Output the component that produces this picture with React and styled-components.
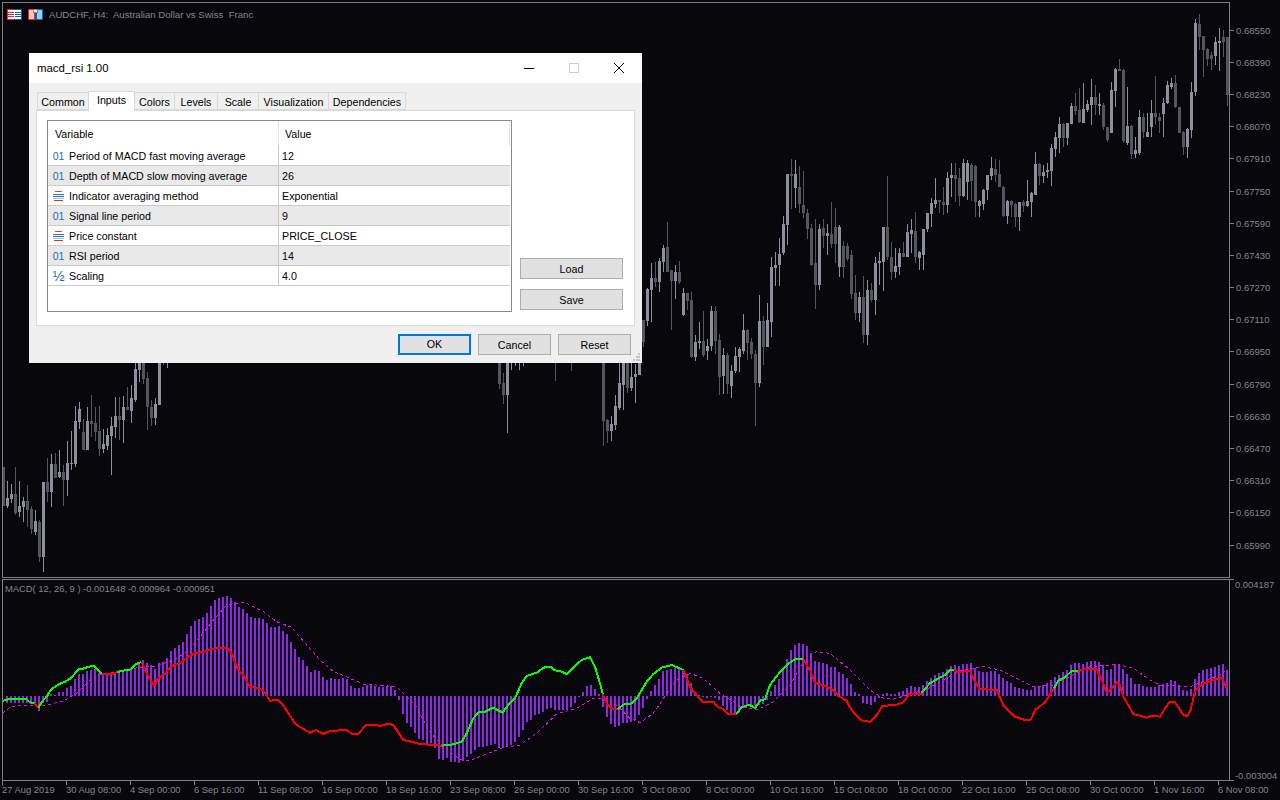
import React from 'react'
import styled, { createGlobalStyle } from 'styled-components'

const GlobalStyle = createGlobalStyle`
  html, body { margin: 0; padding: 0; background: #07070c; }
  * { box-sizing: border-box; }
`

const chartFont = `"Liberation Sans", Arial, sans-serif`
const uiFont = `"Liberation Sans", Arial, sans-serif`
const lineColor = '#7f7f87'
const textColor = '#85858d'

const Page = styled.div`
  width: 1280px;
  height: 800px;
  padding: 2px 0 0 2px;
  overflow: hidden;
  position: relative;
  background: #07070c;
  font-family: ${chartFont};
`
const PaneRow = styled.div`
  display: flex;
  height: ${p => p.$h}px;
  margin-top: ${p => p.$gap || 0}px;
`
const Plot = styled.div`
  position: relative;
  flex: none;
  width: 1228px;
  height: 100%;
  border: 1px solid ${lineColor};
  overflow: hidden;
`
const PlotSvg = styled.svg`
  display: block;
  shape-rendering: crispEdges;
`
const ChartTitle = styled.div`
  position: absolute;
  top: 5px;
  left: 4px;
  display: flex;
  align-items: center;
  gap: 6px;
  color: ${textColor};
  font-size: 9.6px;
  line-height: 13px;
  white-space: pre;
`
const MacdTitle = styled.div`
  position: absolute;
  top: 2px;
  left: 2px;
  color: ${textColor};
  font-size: 9.4px;
  line-height: 13px;
  white-space: pre;
`
const PriceAxis = styled.div`
  padding-top: 12px;
  color: ${textColor};
  font-size: 9.5px;
`
const PriceRow = styled.div`
  display: flex;
  align-items: center;
  gap: 2px;
  height: 32.19px;
  &::before {
    content: '';
    width: 4px;
    height: 1px;
    background: ${lineColor};
  }
`
const SubAxis = styled.div`
  display: flex;
  flex-direction: column;
  justify-content: space-between;
  color: ${textColor};
  font-size: 9.4px;
  line-height: 11px;
`
const SubRow = styled.div`
  display: flex;
  align-items: ${p => p.$edge};
  gap: 1px;
  height: 11px;
  &::before {
    content: '';
    width: 4px;
    height: 1px;
    background: ${lineColor};
  }
`
const TimeAxis = styled.div`
  display: grid;
  grid-template-columns: repeat(20, 64px);
  color: ${textColor};
  font-size: 9.4px;
  line-height: 10px;
  white-space: nowrap;
`
const TimeCell = styled.div`
  &::before {
    content: '';
    display: block;
    width: 1px;
    height: 4px;
    background: ${lineColor};
  }
`

/* dialog */
const Dialog = styled.div`
  position: absolute;
  left: 29px;
  top: 53px;
  width: 613px;
  height: 310px;
  background: #f0f0f0;
  color: #000;
  font-family: ${uiFont};
  font-size: 10.7px;
`
const TitleBar = styled.div`
  display: flex;
  align-items: center;
  height: 30px;
  padding-left: 8px;
  background: #fff;
  font-size: 11.4px;
`
const WindowTitle = styled.div`
  flex: 1;
`
const WinButton = styled.div`
  display: flex;
  align-items: center;
  justify-content: center;
  width: ${p => p.$w}px;
  height: 30px;
`
const TabStrip = styled.div`
  display: flex;
  align-items: flex-end;
  height: 27px;
  padding-left: 9px;
`
const Tab = styled.div`
  position: relative;
  top: ${p => (p.$active ? 1 : 0)}px;
  width: ${p => p.$w}px;
  height: ${p => (p.$active ? 20 : 18)}px;
  margin-left: -1px;
  padding-top: ${p => (p.$active ? 0 : 1)}px;
  text-align: center;
  line-height: 16px;
  background: ${p => (p.$active ? '#fff' : '#f0f0f0')};
  border: 1px solid #d9d9d9;
  border-bottom: ${p => (p.$active ? 'none' : '1px solid #d9d9d9')};
  z-index: ${p => (p.$active ? 1 : 0)};
`
const Panel = styled.div`
  display: flex;
  height: 216px;
  margin: 0 7px;
  padding: 9px 10px 15px;
  background: #fff;
  border: 1px solid #d9d9d9;
`
const Grid = styled.div`
  flex: none;
  width: 465px;
  height: 192px;
  border: 1px solid #87898b;
  background: #fff;
`
const HeadRow = styled.div`
  display: grid;
  grid-template-columns: 231px 1fr;
  height: 25px;
  margin-right: 1px;
  border-right: 1px solid #e3e3e3;
`
const HeadCell = styled.div`
  padding-left: ${p => p.$pad}px;
  line-height: 27px;
  border-right: ${p => (p.$line ? '1px solid #e3e3e3' : 'none')};
`
const Row = styled.div`
  display: grid;
  grid-template-columns: 231px 1fr;
  height: 20px;
  margin-right: 1px;
  background: ${p => (p.$shade ? '#e9e9e9' : '#fff')};
  border-bottom: 1px solid #cacaca;
`
const NameCell = styled.div`
  display: flex;
  align-items: center;
  gap: 5px;
  padding-left: 5px;
  border-right: 1px solid #cacaca;
`
const ValueCell = styled.div`
  padding-left: 3px;
  line-height: 20px;
`
const TypeMark = styled.span`
  display: flex;
  align-items: center;
  justify-content: center;
  flex: none;
  width: 11px;
  height: 12px;
  color: #1a6bb5;
  font-size: ${p => p.$size}px;
`
const Side = styled.div`
  display: flex;
  flex-direction: column;
  justify-content: flex-end;
  gap: 10px;
  width: 103px;
  margin-left: 8px;
`
const Button = styled.div`
  flex: none;
  width: ${p => p.$w}px;
  height: 21px;
  text-align: center;
  line-height: 20px;
  background: #e1e1e1;
  border: 1px solid #adadad;
`
const DefaultButton = styled(Button)`
  border: 2px solid #0078d7;
  line-height: 17px;
`
const Footer = styled.div`
  display: flex;
  justify-content: flex-end;
  gap: 7px;
  padding: 8px 11px 0 0;
`
const Grip = styled.svg`
  position: absolute;
  right: 1px;
  bottom: 2px;
`

/* candle rows: [wick top, body top, body bottom, wick bottom, dark], y in thirds of a px */
const candleSets = [
  { start: -1, off: 1080, rows: [
    [320, 320, 438, 438, 1], [363, 414, 438, 444, 0], [372, 402, 417, 430, 0], [321, 402, 459, 465, 1], [363, 438, 456, 471, 0],
    [411, 423, 441, 486, 0], [375, 423, 450, 501, 1], [438, 447, 507, 522, 1], [450, 483, 516, 525, 0], [480, 486, 591, 606, 1],
    [366, 366, 591, 636, 0], [294, 366, 396, 426, 1], [282, 312, 396, 441, 0], [279, 312, 354, 354, 1], [270, 336, 351, 354, 0],
    [315, 336, 360, 438, 1], [243, 309, 360, 408, 0], [213, 309, 312, 330, 0], [138, 183, 312, 321, 0], [126, 147, 186, 207, 0],
    [177, 216, 270, 270, 1], [141, 183, 270, 270, 0], [105, 183, 192, 231, 1], [141, 189, 216, 243, 1], [138, 213, 267, 288, 1],
    [207, 252, 267, 279, 0], [204, 225, 258, 270, 0], [171, 198, 228, 345, 0], [111, 168, 201, 234, 0], [111, 168, 180, 240, 1],
    [108, 141, 180, 249, 0], [81, 141, 150, 150, 1], [75, 114, 153, 189, 0], [0, 27, 120, 126, 0], [0, 0, 30, 66, 0],
    [0, 0, 57, 72, 1], [36, 54, 141, 210, 1], [120, 141, 174, 198, 1], [114, 132, 174, 195, 0], [0, 0, 135, 135, 0],
    [0, 0, 0, 15, 1], [0, 0, 0, 24, 0],
  ] },
  { start: 123, off: 1020, rows: [
    [60, 60, 132, 147, 1], [99, 129, 165, 192, 1], [60, 60, 165, 279, 0], [60, 60, 60, 90, 0], [60, 60, 60, 78, 0],
    [60, 60, 60, 90, 0], [60, 60, 60, 78, 0],
  ] },
  { start: 137, off: 1020, rows: [[60, 60, 60, 123, 1]] },
  { start: 141, off: 1020, rows: [[60, 60, 60, 93, 1]] },
  { start: 149, off: 1020, rows: [
    [60, 60, 243, 318, 1], [237, 240, 273, 309, 1], [228, 252, 273, 303, 0], [165, 198, 255, 270, 0], [70, 129, 204, 210, 0],
    [60, 60, 135, 210, 0], [60, 60, 144, 159, 1], [60, 111, 144, 153, 0], [72, 102, 111, 189, 0], [60, 60, 105, 105, 0],
  ] },
  { start: 159, off: 0, rows: [
    [960, 960, 1025, 1040, 1], [865, 867, 963, 978, 0], [790, 835, 870, 966, 0], [785, 835, 845, 862, 1], [775, 782, 846, 876, 0],
    [735, 745, 785, 815, 0], [667, 742, 815, 815, 1], [810, 810, 843, 990, 1], [795, 815, 843, 897, 0], [782, 815, 846, 852, 1],
    [865, 879, 945, 948, 0], [880, 879, 903, 930, 1], [876, 900, 1071, 1074, 1], [1005, 1026, 1071, 1083, 0], [966, 1023, 1029, 1047, 0],
    [933, 1023, 1065, 1071, 1], [1017, 1038, 1053, 1080, 0], [918, 933, 1038, 1053, 0], [918, 933, 1023, 1062, 1], [1002, 1020, 1131, 1185, 1],
    [1044, 1065, 1128, 1182, 0], [1059, 1065, 1152, 1182, 1], [1095, 1113, 1158, 1194, 0], [1041, 1068, 1113, 1119, 0], [1041, 1047, 1071, 1116, 0],
    [942, 990, 1053, 1062, 0], [987, 990, 1029, 1080, 1], [1014, 1026, 1062, 1077, 1], [1050, 1062, 1149, 1278, 1], [885, 963, 1149, 1161, 0],
    [948, 963, 1041, 1095, 1], [909, 960, 1041, 1041, 0],
  ] },
  { start: 191, off: 0, rows: [
    [770, 800, 966, 1011, 0], [755, 795, 805, 858, 0], [715, 762, 795, 857, 0], [648, 672, 760, 765, 0], [525, 523, 675, 735, 0],
    [478, 523, 528, 628, 1], [480, 522, 563, 625, 0], [498, 560, 612, 640, 1], [513, 615, 638, 655, 1], [628, 638, 686, 718, 1],
    [672, 684, 796, 798, 1], [658, 790, 855, 927, 1], [672, 686, 855, 870, 0], [658, 684, 708, 745, 1], [672, 700, 708, 765, 0],
    [605, 703, 732, 745, 1], [625, 680, 732, 790, 1], [675, 680, 802, 830, 0], [722, 738, 802, 835, 1], [728, 738, 778, 782, 1],
    [750, 765, 882, 897, 1], [825, 879, 939, 960, 1], [876, 891, 939, 966, 0], [828, 891, 1005, 1029, 1], [840, 870, 1005, 1035, 0],
    [849, 870, 900, 906, 1], [770, 790, 900, 945, 0], [755, 783, 790, 855, 0], [680, 680, 785, 873, 0], [528, 680, 770, 780, 1],
    [725, 770, 815, 840, 1], [745, 797, 815, 835, 0], [745, 760, 800, 825, 0], [727, 760, 770, 772, 1], [672, 697, 770, 772, 0],
    [658, 690, 702, 760, 0], [637, 692, 770, 790, 1], [752, 755, 775, 810, 0], [687, 687, 765, 810, 0], [640, 640, 688, 695, 0],
    [595, 610, 642, 680, 0], [535, 600, 612, 625, 0], [600, 600, 606, 640, 1], [560, 605, 615, 645, 1], [515, 535, 615, 640, 0],
    [490, 525, 535, 592, 0], [490, 525, 537, 605, 1], [505, 535, 588, 618, 1], [478, 490, 588, 590, 0], [480, 490, 545, 600, 0],
    [490, 495, 542, 602, 1], [495, 497, 605, 652, 1], [600, 603, 618, 650, 0], [568, 570, 612, 630, 0], [525, 525, 570, 600, 0],
    [472, 505, 527, 540, 0], [478, 507, 525, 545, 1], [480, 523, 560, 562, 1], [558, 560, 647, 650, 1], [600, 603, 647, 672, 0],
    [600, 603, 615, 650, 1], [610, 612, 650, 680, 1], [605, 607, 652, 692, 0], [600, 607, 617, 635, 1], [540, 603, 617, 620, 0],
    [575, 578, 605, 650, 0], [457, 492, 585, 585, 0], [490, 492, 527, 555, 1], [495, 517, 527, 550, 0], [490, 510, 517, 535, 0],
    [433, 445, 513, 557, 0], [395, 410, 447, 470, 0], [350, 372, 415, 458, 0], [370, 372, 415, 440, 1], [368, 368, 415, 435, 0],
    [310, 318, 372, 372, 0], [278, 318, 333, 345, 1], [265, 330, 365, 368, 1], [250, 328, 368, 368, 0], [300, 312, 330, 335, 0],
    [238, 292, 315, 375, 0], [255, 292, 315, 345, 1], [280, 312, 318, 345, 0], [308, 315, 382, 390, 1], [380, 380, 420, 425, 1],
    [245, 270, 398, 400, 0], [205, 208, 272, 320, 0], [178, 208, 212, 212, 1], [208, 210, 422, 430, 1], [262, 378, 430, 435, 0],
    [375, 378, 462, 478, 1], [410, 450, 462, 475, 0], [330, 350, 460, 465, 0], [338, 350, 395, 415, 1], [340, 395, 410, 410, 0],
    [300, 340, 380, 410, 0], [228, 340, 350, 375, 1], [340, 350, 362, 400, 1], [295, 308, 343, 410, 0], [243, 255, 310, 312, 0],
    [235, 250, 260, 268, 0], [225, 250, 322, 325, 1], [320, 322, 398, 400, 1], [392, 395, 442, 465, 1], [385, 388, 442, 475, 0],
    [245, 275, 390, 415, 0], [58, 68, 275, 288, 0], [42, 72, 112, 150, 1], [108, 108, 150, 232, 1], [145, 148, 178, 198, 1],
    [155, 165, 178, 210, 1], [110, 125, 168, 195, 0], [85, 123, 130, 212, 0], [90, 112, 125, 170, 1], [112, 112, 285, 318, 1],
  ] },
]

const candles = candleSets.flatMap(set =>
  set.rows.map((r, n) => ({
    x: (set.start + n) * 12 + 18,
    wt: r[0] + set.off,
    bt: r[1] + set.off,
    bb: r[2] + set.off,
    wb: r[3] + set.off,
    color: r[4] ? '#55565d' : '#8d8f9d',
  }))
)

/* histogram ends, y from the 570px line in thirds of a px */
const histSets = [
  400, 400, 400, 400, 400, 398, 403, 405, 423, 400, 396, 372, 375, 366, 365, 353, 348, 328, 312, 312, 303, 300, 297, 310, 315, 315,
  312, 310, 308, 305, 300, 298, 295, 278, 270, 280, 285, 297, 280, 276, 265, 243, 235, 225, 216, 192, 168, 153, 147, 142, 130, 107,
  90, 84, 82, 78, 84, 96, 110, 118, 128, 142, 144, 144, 148, 160, 171, 171, 169, 183, 192, 216, 237, 261, 270, 288, 306, 300, 303,
  321, 330, 324, 327, 327, 324, 327, 348, 354, 354, 351, 345, 342, 348, 351, 351, 348, 348, 360, 390, 432, 459, 471, 489, 507,
  510, 525, 520, 535, 568, 570, 565, 575, 575, 578, 572, 562, 552, 540, 531, 530, 527, 524, 522, 533, 535, 530, 524, 516, 500, 480,
  456, 450, 435, 432, 425, 417, 414, 419, 420, 420, 420, 412, 400, 380, 366, 348, 345, 357, 372, 412, 440, 462, 470, 468, 460, 458,
  455, 450, 435, 414, 387, 363, 345, 327, 303, 300, 297, 294, 294, 300, 312, 340, 365, 375, 380, 384, 380, 384, 390, 408, 420, 432,
  436, 425, 415, 408, 405, 405, 405, 402, 390, 362, 345, 326, 300, 267, 240, 225, 219, 222, 228, 250, 273, 276, 280, 282, 291, 291,
  306, 312, 324, 342, 365, 372, 400, 402, 405, 395, 385, 372, 370, 373, 373, 365, 362, 354, 348, 351, 351, 345, 333, 324, 315, 309,
  306, 298, 287, 286, 288, 282, 282, 279, 294, 303, 306, 306, 303, 303, 312, 324, 333, 340, 351, 354, 357, 360, 360, 351, 348, 345,
  339, 330, 322, 315, 306, 300, 285, 279, 280, 282, 276, 273, 273, 276, 285, 300, 297, 282, 282, 297, 312, 324, 342, 342, 348, 351,
  351, 351, 345, 342, 339, 330, 333, 345, 360, 363, 357, 327, 309, 300, 297, 294, 291, 285, 282, 300,
]

const Z7 = 1260
const Z8 = 2550
const shift = (dx, pts) => pts.map(([x, y]) => [x + dx, y])

const trendSegments = [
  ['g', [[8, 393], [18, 390], [30, 386], [78, 386], [90, 397], [103, 400]]],
  ['r', [[103, 400], [115, 413]]],
  ['g', [[115, 413], [128, 393], [140, 380], [152, 360], [165, 350], [178, 342], [195, 335], [212, 325], [225, 310], [238, 297], [255, 295], [265, 290], [282, 288], [292, 298], [305, 311]]],
  ['r', [[305, 311], [340, 311], [352, 306]]],
  ['g', [[352, 306], [370, 302], [392, 298], [408, 282], [425, 276]]],
  ['r', [[425, 276], [440, 310], [462, 348], [475, 325], [495, 312], [512, 290], [528, 283], [545, 277], [565, 260], [585, 250], [610, 246], [635, 238], [655, 234], [682, 234], [695, 250], [715, 302], [730, 315], [750, 350], [775, 355], [790, 362], [810, 392], [835, 390], [850, 405], [865, 430], [882, 455], [895, 468], [930, 488], [948, 480], [970, 492], [990, 483], [1040, 480], [1055, 491], [1075, 491], [1098, 465], [1145, 467], [1165, 461], [1180, 465], [1210, 510], [1230, 514], [1260, 522], [1325, 527]]],
  ['g', shift(Z7, [[65, 527], [100, 523], [125, 515], [140, 490], [160, 445], [175, 427], [195, 425], [220, 413], [248, 428], [265, 405], [285, 385], [305, 340], [320, 318], [350, 308], [370, 293], [392, 290], [402, 301], [420, 303], [440, 312], [460, 292], [485, 270], [510, 262], [525, 290], [540, 340], [548, 372]])],
  ['r', shift(Z7, [[548, 372], [560, 400], [575, 415], [593, 417]])],
  ['g', shift(Z7, [[593, 417], [610, 404], [635, 400], [650, 385], [680, 335], [700, 312], [725, 293], [755, 285], [790, 300]])],
  ['r', shift(Z7, [[790, 300], [810, 350], [825, 370], [850, 397], [880, 395], [895, 412], [908, 416], [922, 431], [950, 431]])],
  ['g', shift(Z7, [[950, 431], [965, 412], [988, 404], [1005, 414], [1020, 392], [1035, 388], [1050, 345], [1070, 318], [1100, 285], [1125, 267], [1150, 268]])],
  ['r', shift(Z7, [[1150, 268], [1170, 300], [1185, 338], [1210, 346], [1240, 360], [1255, 378], [1280, 392], [1290, 412]])],
  ['r', shift(Z8, [[0, 412], [12, 430], [33, 450], [60, 456], [80, 435], [97, 408], [140, 404], [160, 397], [178, 372], [215, 372]])],
  ['g', shift(Z8, [[215, 368], [240, 340], [265, 325], [285, 315], [300, 301], [312, 301]])],
  ['r', shift(Z8, [[312, 301], [325, 307], [360, 302], [375, 335], [390, 357], [440, 360], [460, 405], [495, 440], [525, 450], [542, 450], [555, 420], [585, 397], [612, 355]])],
  ['g', shift(Z8, [[612, 355], [625, 332], [645, 322], [665, 303], [685, 302]])],
  ['r', shift(Z8, [[685, 302], [710, 297], [740, 298], [755, 330], [770, 368], [785, 355], [800, 337], [808, 340], [820, 380], [850, 432], [890, 443], [905, 437], [930, 440], [945, 415], [958, 397], [975, 397], [1000, 435], [1012, 438], [1022, 420], [1035, 362], [1055, 342], [1085, 332], [1115, 323], [1122, 335], [1130, 355]])],
]

const signal = [
  [8, 430], [30, 412], [55, 405], [140, 405], [190, 393], [230, 370], [270, 330], [300, 315], [350, 305], [400, 295], [440, 290], [470, 288], [520, 270], [570, 240], [600, 200], [640, 150], [680, 105], [720, 98], [735, 98], [790, 125], [830, 155], [875, 172], [920, 225], [960, 270], [1000, 305], [1050, 325], [1090, 342], [1190, 350], [1215, 375], [1250, 410], [1260, 432],
  ...shift(Z7, [[30, 485], [60, 520], [85, 540], [120, 568], [150, 572], [210, 548], [250, 532], [300, 525], [350, 490], [410, 432], [470, 415], [520, 385], [560, 385], [600, 415], [630, 445], [660, 458], [700, 430], [735, 378], [770, 330], [810, 310], [850, 325], [900, 370], [960, 408], [1010, 420], [1060, 395], [1110, 345], [1150, 280], [1190, 245], [1230, 250], [1290, 300]]),
  ...shift(Z8, [[30, 330], [60, 360], [100, 385], [130, 388], [170, 375], [230, 358], [280, 330], [330, 302], [400, 290], [450, 300], [500, 325], [550, 350], [610, 345], [670, 315], [720, 290], [800, 283], [850, 295], [900, 330], [930, 345], [1020, 350], [1070, 330], [1110, 315], [1130, 300]]),
]

const toPoints = pts => pts.map(([x, y]) => `${x},${y}`).join(' ')

const priceLabels = ['0.68550', '0.68390', '0.68230', '0.68070', '0.67910', '0.67750', '0.67590', '0.67430', '0.67270', '0.67110', '0.66950', '0.66790', '0.66630', '0.66470', '0.66310', '0.66150', '0.65990']
const timeLabels = ['27 Aug 2019', '30 Aug 08:00', '4 Sep 00:00', '6 Sep 16:00', '11 Sep 08:00', '16 Sep 00:00', '18 Sep 16:00', '23 Sep 08:00', '26 Sep 00:00', '30 Sep 16:00', '3 Oct 08:00', '8 Oct 00:00', '10 Oct 16:00', '15 Oct 08:00', '18 Oct 00:00', '22 Oct 16:00', '25 Oct 08:00', '30 Oct 00:00', '1 Nov 16:00', '6 Nov 08:00']
const tabs = [['Common', 52], ['Inputs', 47, true], ['Colors', 41], ['Levels', 44], ['Scale', 42], ['Visualization', 71], ['Dependencies', 78]]
const inputs = [
  ['int', 'Period of MACD fast moving average', '12'],
  ['int', 'Depth of MACD slow moving average', '26'],
  ['enum', 'Indicator averaging method', 'Exponential'],
  ['int', 'Signal line period', '9'],
  ['enum', 'Price constant', 'PRICE_CLOSE'],
  ['int', 'RSI period', '14'],
  ['float', 'Scaling', '4.0'],
]

const TableIcon = () => (
  <svg width="15" height="11" viewBox="0 0 15 11" shapeRendering="crispEdges">
    <rect width="15" height="11" fill="#0a5fb4" />
    <rect width="7" height="11" fill="#e8262a" />
    <rect x="1" y="1" width="13" height="9" fill="#fff" />
    <path d="M1 3.5h6M1 5.5h6M1 7.5h6" stroke="#e8262a" />
    <path d="M8 3.5h6M8 5.5h6M8 7.5h6" stroke="#0a5fb4" />
  </svg>
)

const SaveIcon = () => (
  <svg width="15" height="11" viewBox="0 0 15 11" shapeRendering="crispEdges">
    <rect width="7" height="11" fill="#e8262a" />
    <rect x="7" width="8" height="11" fill="#0a5fb4" />
    <rect x="1" y="1" width="5" height="9" fill="#ffc9c0" />
    <rect x="9" y="1" width="5" height="9" fill="#8fd0f5" />
    <rect x="5" y="0" width="5" height="4" fill="#8a8a8a" />
    <rect x="6" y="1" width="3" height="2" fill="#eee" />
  </svg>
)

const EnumIcon = () => (
  <svg width="11" height="12" viewBox="0 0 11 12" shapeRendering="crispEdges">
    <path d="M2 1.5h7" stroke="#e8403a" />
    <path d="M0 4.5h11" stroke="#1a78d0" />
    <path d="M0 6.5h11" stroke="#1a78d0" />
    <path d="M0 8.5h11" stroke="#a8c0d4" />
    <path d="M1 10.5h9" stroke="#e8302a" />
  </svg>
)

const TypeIcon = ({ type }) => {
  if (type === 'enum') return <TypeMark><EnumIcon /></TypeMark>
  if (type === 'float') return <TypeMark $size={14}>½</TypeMark>
  return <TypeMark $size={10.5}>01</TypeMark>
}

const App = () => {
  return (
    <Page>
      <GlobalStyle />
      <PaneRow $h={576}>
        <Plot>
          <PlotSvg width="1226" height="574" viewBox="9 9 3678 1722">
            {candles.map((c, n) => (
              <g key={n} fill={c.color}>
                <rect x={c.x + 3} y={c.wt} width="3" height={Math.max(c.wb - c.wt, 3)} />
                <rect x={c.x} y={c.bt} width="9" height={Math.max(c.bb - c.bt, 3)} />
              </g>
            ))}
          </PlotSvg>
          <ChartTitle>
            <TableIcon />
            <SaveIcon />
            <span>AUDCHF, H4:  Australian Dollar vs Swiss  Franc</span>
          </ChartTitle>
        </Plot>
        <PriceAxis>
          {priceLabels.map(l => <PriceRow key={l}>{l}</PriceRow>)}
        </PriceAxis>
      </PaneRow>
      <PaneRow $h={202} $gap={1}>
        <Plot>
          <PlotSvg width="1226" height="200" viewBox="9 1740 3678 600">
            {histSets.map((end, i) => {
              const y = end + 1710
              const top = Math.min(y, 2088)
              return <rect key={i} x={i * 12 + 18} y={top} width="6" height={Math.abs(y - 2088)} fill="#8a2be2" />
            })}
            <g transform="translate(0 1710)" fill="none">
              <polyline points={toPoints(signal)} stroke="#ff00ff" strokeWidth="3" strokeDasharray="9 9" />
              {trendSegments.map(([kind, pts], n) => (
                <polyline key={n} points={toPoints(pts)} stroke={kind === 'g' ? '#00ff00' : '#ff0000'} strokeWidth="6" strokeLinejoin="round" />
              ))}
            </g>
          </PlotSvg>
          <MacdTitle>MACD( 12, 26, 9 ) -0.001648 -0.000964 -0.000951</MacdTitle>
        </Plot>
        <SubAxis>
          <SubRow $edge="flex-start">0.004187</SubRow>
          <SubRow $edge="flex-end">-0.003004</SubRow>
        </SubAxis>
      </PaneRow>
      <TimeAxis>
        {timeLabels.map(l => <TimeCell key={l}>{l}</TimeCell>)}
      </TimeAxis>

      <Dialog>
        <TitleBar>
          <WindowTitle>macd_rsi 1.00</WindowTitle>
          <WinButton $w={45}>
            <svg width="10" height="10" viewBox="0 0 10 10" shapeRendering="crispEdges"><path d="M0 5.5h10" stroke="#000" /></svg>
          </WinButton>
          <WinButton $w={45}>
            <svg width="10" height="10" viewBox="0 0 10 10" shapeRendering="crispEdges"><rect x="0.5" y="0.5" width="9" height="9" fill="none" stroke="#ccc" /></svg>
          </WinButton>
          <WinButton $w={46}>
            <svg width="10" height="10" viewBox="0 0 10 10"><path d="M0 0L10 10M10 0L0 10" stroke="#000" /></svg>
          </WinButton>
        </TitleBar>
        <TabStrip>
          {tabs.map(([label, w, active]) => <Tab key={label} $w={w} $active={active}>{label}</Tab>)}
        </TabStrip>
        <Panel>
          <Grid>
            <HeadRow>
              <HeadCell $pad={7} $line>Variable</HeadCell>
              <HeadCell $pad={6}>Value</HeadCell>
            </HeadRow>
            {inputs.map(([type, name, value], n) => (
              <Row key={name} $shade={n % 2 === 1}>
                <NameCell><TypeIcon type={type} />{name}</NameCell>
                <ValueCell>{value}</ValueCell>
              </Row>
            ))}
          </Grid>
          <Side>
            <Button $w={103}>Load</Button>
            <Button $w={103}>Save</Button>
          </Side>
        </Panel>
        <Footer>
          <DefaultButton $w={73}>OK</DefaultButton>
          <Button $w={73}>Cancel</Button>
          <Button $w={73}>Reset</Button>
        </Footer>
        <Grip width="8" height="8" viewBox="0 0 8 8" shapeRendering="crispEdges" fill="#c4c4c4">
          <rect x="5" y="0" width="2" height="2" />
          <rect x="3" y="3" width="2" height="2" />
          <rect x="5" y="3" width="2" height="2" />
          <rect x="0" y="6" width="2" height="2" />
          <rect x="3" y="6" width="2" height="2" />
          <rect x="5" y="6" width="2" height="2" />
        </Grip>
      </Dialog>
    </Page>
  )
}

export default App
